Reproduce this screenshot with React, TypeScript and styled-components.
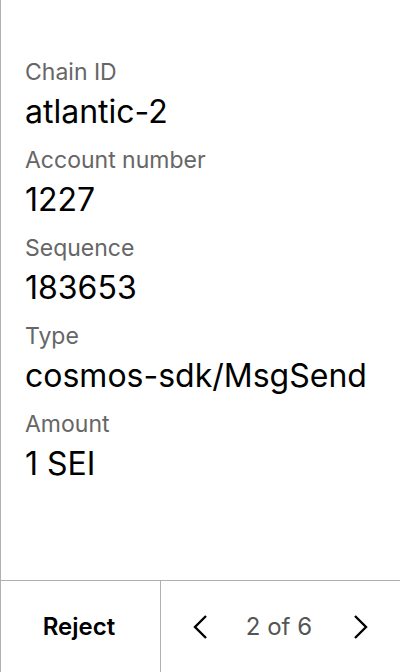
import React from "react";
import styled, { createGlobalStyle } from "styled-components";

const GlobalStyle = createGlobalStyle`
  html, body {
    margin: 0;
    padding: 0;
    background: #ffffff;
  }
  body {
    font-family: Inter, "Noto Sans", sans-serif;
  }
`;

const Screen = styled.div`
  width: 400px;
  height: 672px;
  box-sizing: border-box;
  border-left: 1px solid #b0b0b0;
  display: flex;
  flex-direction: column;
  background: #fff;
`;

const Details = styled.div`
  flex: 1;
  padding: 58px 24px 0 24px;
  display: flex;
  flex-direction: column;
  gap: 14px;
`;

const Field = styled.div`
  display: flex;
  flex-direction: column;
  gap: 6px;
`;

const Label = styled.div`
  font-size: 23px;
  line-height: 28px;
  color: #666666;
`;

const Value = styled.div`
  font-size: 32px;
  line-height: 40px;
  color: #000;
`;

const Footer = styled.div`
  height: 92px;
  box-sizing: border-box;
  border-top: 1px solid #b0b0b0;
  display: grid;
  grid-template-columns: 160px 1fr;
`;

const RejectButton = styled.button`
  border: none;
  border-right: 1px solid #b0b0b0;
  background: none;
  font-family: inherit;
  font-size: 24px;
  font-weight: 600;
  color: #000;
  padding: 0 3px 0 0;
  cursor: pointer;
`;

const Pager = styled.div`
  display: flex;
  align-items: center;
  justify-content: space-between;
  padding: 0 31px 0 31px;
`;

const PageText = styled.span`
  font-size: 24px;
  color: #555;
  margin-right: 3px;
`;

const ArrowButton = styled.button`
  border: none;
  background: none;
  padding: 0;
  width: 16px;
  height: 26px;
  display: flex;
  align-items: center;
  justify-content: center;
  cursor: pointer;
`;

const Chevron = ({ dir }: { dir: "left" | "right" }) => (
  <svg width="16" height="26" viewBox="0 0 16 26" fill="none">
    <path
      d={dir === "left" ? "M14 2 L3 13 L14 24" : "M2 2 L13 13 L2 24"}
      stroke="#000"
      strokeWidth="2.4"
      strokeLinecap="butt"
      strokeLinejoin="miter"
    />
  </svg>
);

const fields = [
  { label: "Chain ID", value: "atlantic-2" },
  { label: "Account number", value: "1227" },
  { label: "Sequence", value: "183653" },
  { label: "Type", value: "cosmos-sdk/MsgSend" },
  { label: "Amount", value: "1 SEI" },
];

export default function App() {
  return (
    <>
      <GlobalStyle />
      <Screen>
        <Details>
          {fields.map((f) => (
            <Field key={f.label}>
              <Label>{f.label}</Label>
              <Value>{f.value}</Value>
            </Field>
          ))}
        </Details>
        <Footer>
          <RejectButton>Reject</RejectButton>
          <Pager>
            <ArrowButton aria-label="previous">
              <Chevron dir="left" />
            </ArrowButton>
            <PageText>2 of 6</PageText>
            <ArrowButton aria-label="next">
              <Chevron dir="right" />
            </ArrowButton>
          </Pager>
        </Footer>
      </Screen>
    </>
  );
}
